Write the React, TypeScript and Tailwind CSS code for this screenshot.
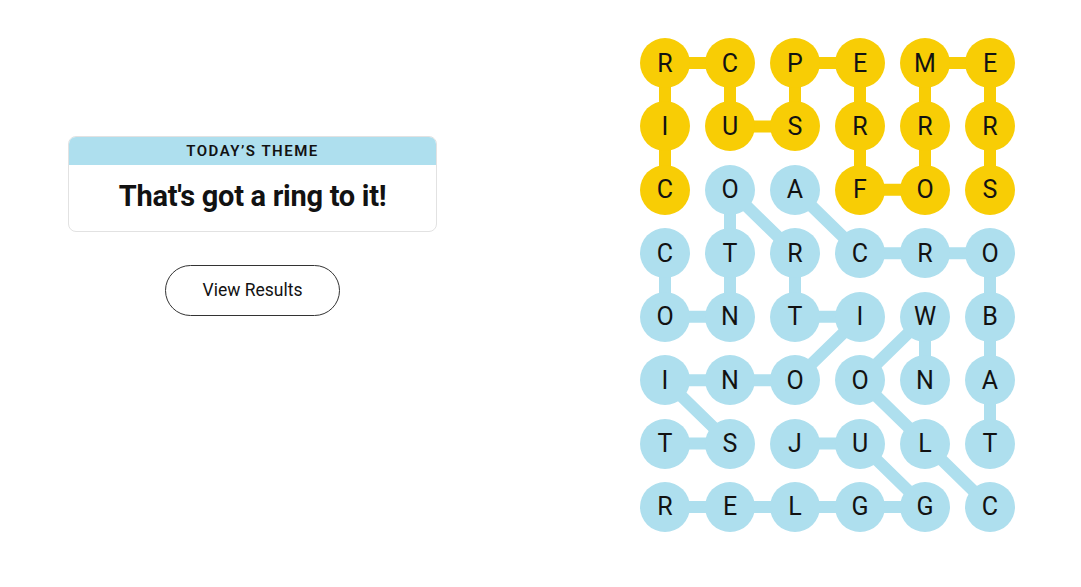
import React from 'react';

const GRID = [
    'RCPEME',
    'IUSRRR',
    'COAFOS',
    'CTRCRO',
    'ONTIWB',
    'INOONA',
    'TSJULT',
    'RELGGC',
];

const YELLOW = '#f8cd05';
const BLUE = '#aedfee';

type Cell = [number, number];

// found words, each as a chain of [row, col]
const WORDS: { color: string; cells: Cell[] }[] = [
    {
        color: YELLOW,
        cells: [[2, 0], [1, 0], [0, 0], [0, 1], [1, 1], [1, 2], [0, 2], [0, 3], [1, 3], [2, 3], [2, 4], [1, 4], [0, 4], [0, 5], [1, 5], [2, 5]],
    },
    {
        color: BLUE,
        cells: [[3, 0], [4, 0], [4, 1], [3, 1], [2, 1], [3, 2], [4, 2], [4, 3], [5, 2], [5, 1], [5, 0], [6, 1], [6, 0]],
    },
    { color: BLUE, cells: [[2, 2], [3, 3], [3, 4], [3, 5], [4, 5], [5, 5], [6, 5]] },
    { color: BLUE, cells: [[7, 5], [6, 4], [5, 3], [4, 4], [5, 4]] },
    { color: BLUE, cells: [[6, 2], [6, 3], [7, 4], [7, 3], [7, 2], [7, 1], [7, 0]] },
];

const COL_STEP = 65;
const ROW_STEP = 63.43;
const R = 25;

function colorOf(r: number, c: number) {
    for (const w of WORDS) {
        if (w.cells.some(([a, b]) => a === r && b === c)) return w.color;
    }
    return '#ffffff';
}

function Board() {
    const width = 5 * COL_STEP + 2 * R;
    const height = 7 * ROW_STEP + 2 * R;
    return (
        <div className="relative">
            <svg className="absolute inset-0" width={width} height={height} viewBox={`0 0 ${width} ${height}`} aria-hidden="true">
                {WORDS.map((w, i) => (
                    <polyline
                        key={i}
                        points={w.cells.map(([r, c]) => `${R + c * COL_STEP},${R + r * ROW_STEP}`).join(' ')}
                        fill="none"
                        stroke={w.color}
                        strokeWidth={12}
                        strokeLinejoin="round"
                    />
                ))}
            </svg>
            <div className="relative grid grid-cols-[repeat(6,50px)] gap-x-[15px] gap-y-[13.43px]">
                {GRID.flatMap((row, r) =>
                    row.split('').map((ch, c) => (
                        <div
                            key={`${r}-${c}`}
                            className="flex h-[50px] w-[50px] items-center justify-center rounded-full text-[25px] leading-none text-[#121212]"
                            style={{ backgroundColor: colorOf(r, c) }}
                        >
                            {ch}
                        </div>
                    )),
                )}
            </div>
        </div>
    );
}

export default function App() {
    return (
        <div className="flex min-h-[587px] w-[1081px] items-start bg-white pt-[38px] font-['Roboto','Liberation_Sans',sans-serif] text-[#121212]">
            <div className="ml-[68px] mt-[98px] flex w-[369px] flex-col items-center">
                <div className="w-full overflow-hidden rounded-lg border border-[#e2e2e2]">
                    <div className="flex h-[28px] items-center justify-center bg-[#aedfee] text-[15px] font-semibold tracking-[0.1em] uppercase">
                        Today’s Theme
                    </div>
                    <div className="flex h-[66px] items-center justify-center pb-[2px] text-[29px] font-bold tracking-[-0.01em]">
                        That's got a ring to it!
                    </div>
                </div>
                <button
                    type="button"
                    className="mt-[33px] flex h-[51px] w-[175px] items-center justify-center rounded-full border border-[#333] bg-white text-[17.5px] text-[#121212]"
                >
                    View Results
                </button>
            </div>
            <div className="ml-[203px]">
                <Board />
            </div>
        </div>
    );
}
